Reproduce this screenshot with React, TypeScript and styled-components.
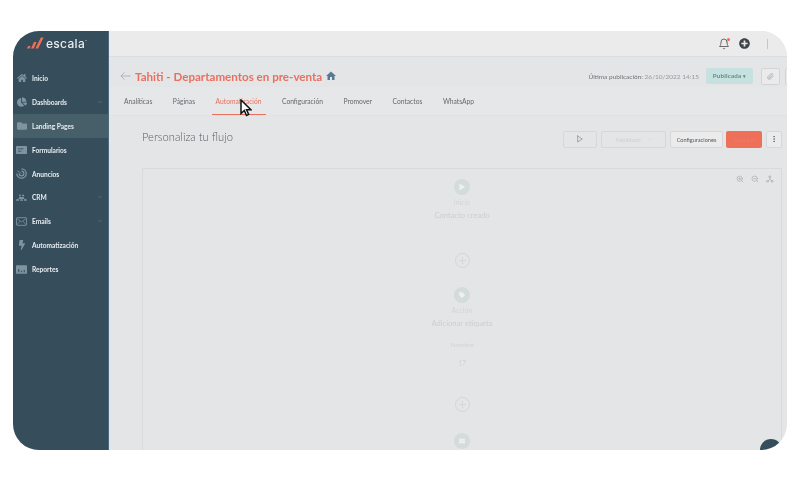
import React from 'react'
import styled, { createGlobalStyle } from 'styled-components'
import { FaHome, FaChartPie, FaFolder, FaBolt, FaPlay, FaTag, FaEnvelope, FaPlusCircle } from 'react-icons/fa'
import { FiChevronDown, FiPlus, FiPlay, FiZoomIn, FiZoomOut, FiPaperclip, FiMoreVertical, FiBell } from 'react-icons/fi'
import { MdHome } from 'react-icons/md'
import { TbHierarchy2 } from 'react-icons/tb'

const GlobalStyle = createGlobalStyle`
    html, body {
        margin: 0;
        padding: 0;
        background: #ffffff;
        font-family: "Lato", "Liberation Sans", sans-serif;
    }
`

const iconGrey = '#8094a0'

const FormsIcon = () => (
    <svg viewBox="0 0 14 10" width="11" height="8">
        <rect width="14" height="10" rx="1" fill={iconGrey} />
        <path d="M2.5 3.5h7M2.5 6.5h4.5" stroke="#364d5c" strokeWidth="1" />
    </svg>
)

const RadarIcon = () => (
    <svg viewBox="0 0 14 14" width="11" height="11" fill="none" stroke={iconGrey}>
        <path d="M7 1a6 6 0 1 1-6 6" strokeWidth="1.6" />
        <path d="M7 4a3 3 0 1 1-3 3" strokeWidth="1.6" />
        <path d="M1.5 3.5L7 7" strokeWidth="1" />
    </svg>
)

const PeopleIcon = () => (
    <svg viewBox="0 0 14 9" width="11" height="7" fill={iconGrey}>
        <circle cx="5" cy="2" r="1.3" />
        <circle cx="9" cy="2" r="1.3" />
        <path d="M3.2 6.5c0-1.6 1-2.6 1.8-2.6h4c.8 0 1.8 1 1.8 2.6z" />
        <path d="M0 8.6c0-1.4.8-2.2 2-2.2s2 .8 2 2.2zM10 8.6c0-1.4.8-2.2 2-2.2s2 .8 2 2.2zM5 8.6c0-1.2.8-1.8 2-1.8s2 .6 2 1.8z" />
    </svg>
)

const MailBoxIcon = () => (
    <svg viewBox="0 0 14 11" width="11" height="9" fill="none" stroke={iconGrey}>
        <rect x="0.6" y="0.6" width="12.8" height="9.8" rx="1" strokeWidth="1.1" />
        <path d="M1 1.5l6 4.5 6-4.5M1 10l4.2-5M13 10L8.8 5" strokeWidth="0.9" />
    </svg>
)

const ReportIcon = () => (
    <svg viewBox="0 0 14 11" width="11" height="9">
        <rect width="14" height="11" rx="1" fill={iconGrey} />
        <path d="M3.5 9V5M7 9V7M10.5 9V6" stroke="#364d5c" strokeWidth="1.4" />
    </svg>
)

const navItems = [
    { label: 'Inicio', icon: <FaHome /> },
    { label: 'Dashboards', icon: <FaChartPie />, more: true },
    { label: 'Landing Pages', icon: <FaFolder />, active: true },
    { label: 'Formularios', icon: <FormsIcon /> },
    { label: 'Anuncios', icon: <RadarIcon /> },
    { label: 'CRM', icon: <PeopleIcon />, more: true },
    { label: 'Emails', icon: <MailBoxIcon />, more: true },
    { label: 'Automatización', icon: <FaBolt /> },
    { label: 'Reportes', icon: <ReportIcon /> }
]

const tabs = [
    { label: 'Analíticas' },
    { label: 'Páginas' },
    { label: 'Automatización', active: true },
    { label: 'Configuración' },
    { label: 'Promover' },
    { label: 'Contactos' },
    { label: 'WhatsApp' }
]

const App: React.FC = () => {
    return (
        <>
            <GlobalStyle />
            <Page>
                <Frame>
                    <Sidebar>
                        <LogoRow>
                            <svg width="17" height="12" viewBox="0 0 17 12">
                                <path d="M0 11.5h2.6l1-2.4H1z M4 11.5h2.8l2.8-6.6H7z M8.4 11.5h2.8L16.6 0.5h-2.8z" fill="#ee6f57" />
                            </svg>
                            <LogoText>escala<sup>™</sup></LogoText>
                        </LogoRow>
                        <Nav>
                            {navItems.map((item) => (
                                <NavItem key={item.label} $active={item.active}>
                                    <NavIcon>{item.icon}</NavIcon>
                                    <span>{item.label}</span>
                                    {item.more ? <NavChevron><FiChevronDown /></NavChevron> : null}
                                </NavItem>
                            ))}
                        </Nav>
                    </Sidebar>
                    <Main>
                        <TopBar>
                            <BellWrap>
                                <FiBell />
                                <BellDot />
                            </BellWrap>
                            <PlusIcon><FaPlusCircle /></PlusIcon>
                            <TopDivider />
                        </TopBar>
                        <Header>
                            <BackArrow viewBox="0 0 12 10">
                                <path d="M11.5 5H1M5 1L1 5l4 4" fill="none" stroke="#a9b1b8" strokeWidth="1" />
                            </BackArrow>
                            <Title>Tahiti - Departamentos en pre-venta</Title>
                            <TitleHome><MdHome /></TitleHome>
                            <LastPublished>Última publicación: <em>26/10/2022 14:15</em></LastPublished>
                            <StatusBadge>Publicada <small>▾</small></StatusBadge>
                            <LinkButton><FiPaperclip /></LinkButton>
                            <LinkButton $clipped />
                        </Header>
                        <Tabs>
                            {tabs.map((tab) => (
                                <Tab key={tab.label} $active={tab.active}>{tab.label}</Tab>
                            ))}
                        </Tabs>
                        <FlowSection>
                            <FlowToolbar>
                                <FlowTitle>Personaliza tu flujo</FlowTitle>
                                <ToolButton $width={34}><FiPlay /></ToolButton>
                                <ToolButton $width={65} $faded>Habilitado <FiChevronDown /></ToolButton>
                                <ToolButton $width={53} $strong>Configuraciones</ToolButton>
                                <SaveButton>Guardar</SaveButton>
                                <ToolButton $width={16} $strong><FiMoreVertical /></ToolButton>
                            </FlowToolbar>
                            <Canvas>
                                <CanvasTools>
                                    <FiZoomIn />
                                    <FiZoomOut />
                                    <TbHierarchy2 />
                                </CanvasTools>
                                <FlowNode>
                                    <NodeCircle><FaPlay /></NodeCircle>
                                    <NodeKind>Inicio</NodeKind>
                                    <NodeName>Contacto creado</NodeName>
                                </FlowNode>
                                <AddStep><FiPlus /></AddStep>
                                <FlowNode>
                                    <NodeCircle><FaTag /></NodeCircle>
                                    <NodeKind>Acción</NodeKind>
                                    <NodeName>Adicionar etiqueta</NodeName>
                                    <NodeField>Nombre</NodeField>
                                    <NodeValue>17</NodeValue>
                                </FlowNode>
                                <AddStep $second><FiPlus /></AddStep>
                                <FlowNode>
                                    <NodeCircle><FaEnvelope /></NodeCircle>
                                </FlowNode>
                            </Canvas>
                        </FlowSection>
                        <ChatBubble />
                    </Main>
                    <Cursor viewBox="0 0 12 18">
                        <path d="M1 1v13.5l3.3-3 2.2 5 2.2-1-2.2-4.8h4.4z" fill="#fff" stroke="#111" strokeWidth="1.5" />
                    </Cursor>
                </Frame>
            </Page>
        </>
    )
}

export default App

const Page = styled.div`
    width: 800px;
    height: 487px;
    padding: 31px 13px 0;
    box-sizing: border-box;
    overflow: hidden;
`

const Frame = styled.div`
    position: relative;
    display: flex;
    width: 774px;
    height: 419px;
    border-radius: 26px;
    overflow: hidden;
    background: #e4e5e7;
    filter: blur(0.3px);
`

const Sidebar = styled.aside`
    flex: none;
    width: 95px;
    background: #364d5c;
    border-right: 1px solid #4f6a80;
    color: #e8edf0;
`

const LogoRow = styled.div`
    display: flex;
    align-items: center;
    gap: 2px;
    height: 24px;
    padding: 0 0 0 14px;
`

const LogoText = styled.span`
    font-family: "Inter", "Liberation Sans", sans-serif;
    font-size: 12px;
    font-weight: 500;
    color: #e9edef;
    letter-spacing: 0.3px;

    sup {
        font-size: 3px;
        vertical-align: 5px;
    }
`

const Nav = styled.nav`
    padding-top: 11px;
`

const NavItem = styled.div<{ $active?: boolean }>`
    display: flex;
    align-items: center;
    height: 23.9px;
    padding: 0 5px 0 2px;
    font-size: 6.6px;
    font-weight: 700;
    background: ${({ $active }) => ($active ? '#465f69' : 'transparent')};
`

const NavIcon = styled.span`
    display: flex;
    justify-content: center;
    width: 13px;
    margin-right: 4px;
    font-size: 10px;
    color: #8094a0;
`

const NavChevron = styled.span`
    display: flex;
    margin-left: auto;
    font-size: 6px;
    color: #71858f;
`

const Main = styled.main`
    position: relative;
    flex: 1;
    min-width: 0;
`

const TopBar = styled.header`
    display: flex;
    align-items: center;
    justify-content: flex-end;
    height: 25px;
    background: #ebebeb;
    border-bottom: 1px solid #dddddf;
`

const BellWrap = styled.span`
    position: relative;
    display: flex;
    margin-right: 9px;
    font-size: 12px;
    color: #6a6a6a;
`

const BellDot = styled.i`
    position: absolute;
    top: 0;
    right: 0;
    width: 3px;
    height: 3px;
    border-radius: 50%;
    background: #ee6f57;
`

const PlusIcon = styled.span`
    display: flex;
    font-size: 11px;
    color: #404449;
`

const TopDivider = styled.span`
    width: 1px;
    height: 10px;
    margin: 0 19px 0 17px;
    background: #c5c6c8;
`

const Header = styled.div`
    display: flex;
    align-items: center;
    height: 22px;
    padding: 8px 0 0 11px;
    overflow: hidden;
`

const BackArrow = styled.svg`
    flex: none;
    width: 11px;
    height: 10px;
    margin-right: 4px;
`

const Title = styled.h1`
    margin: 0;
    font-size: 11.6px;
    font-weight: 700;
    color: #e8705f;
    white-space: nowrap;
`

const TitleHome = styled.span`
    display: flex;
    margin-left: 3px;
    font-size: 12px;
    color: #5b7a92;
`

const LastPublished = styled.span`
    margin-left: auto;
    font-size: 6.5px;
    color: #6f7376;
    white-space: nowrap;

    em {
        font-style: normal;
        color: #96999c;
    }
`

const StatusBadge = styled.span`
    flex: none;
    width: 47px;
    height: 16px;
    margin: 0 8px 0 7px;
    line-height: 16px;
    text-align: center;
    font-size: 6.2px;
    font-weight: 700;
    letter-spacing: 0.2px;
    color: #5f8b87;
    background: #c6e1df;
    border-radius: 2px;

    small {
        font-size: 5px;
    }
`

const LinkButton = styled.span<{ $clipped?: boolean }>`
    flex: none;
    display: flex;
    align-items: center;
    justify-content: center;
    box-sizing: border-box;
    width: 19px;
    height: 17px;
    margin-right: ${({ $clipped }) => ($clipped ? '-17px' : '5px')};
    font-size: 7px;
    color: #9a9c9f;
    background: #ebebec;
    border: 1px solid #d3d4d6;
    border-radius: 2px;
`

const Tabs = styled.nav`
    display: flex;
    height: 28px;
    padding-left: 11px;
    border-bottom: 1px solid #e0e1e3;
    background: #e6e7e8;
`

const Tab = styled.span<{ $active?: boolean }>`
    display: flex;
    align-items: center;
    height: 28px;
    box-sizing: border-box;
    padding: 0 4px;
    margin-right: 12.5px;
    font-size: 6.7px;
    white-space: nowrap;
    color: ${({ $active }) => ($active ? '#e8705f' : '#66696c')};
    border-bottom: 1px solid ${({ $active }) => ($active ? '#e8705f' : 'transparent')};
`

const FlowSection = styled.section`
    padding: 14px 5px 0 33px;
`

const FlowToolbar = styled.div`
    display: flex;
    align-items: center;
    height: 18px;
    margin-bottom: 20px;
`

const FlowTitle = styled.h2`
    flex: 1;
    margin: -5px 0 0;
    font-size: 11.2px;
    font-weight: 300;
    color: #5c6063;
`

const ToolButton = styled.span<{ $width: number; $faded?: boolean; $strong?: boolean }>`
    flex: none;
    display: flex;
    align-items: center;
    justify-content: center;
    gap: 6px;
    box-sizing: border-box;
    width: ${({ $width }) => $width}px;
    height: 17px;
    margin-left: 4px;
    font-size: 5.6px;
    color: ${({ $faded, $strong }) => ($faded ? '#cfd0d2' : $strong ? '#55585b' : '#85888b')};
    background: ${({ $strong }) => ($strong ? '#ebebec' : 'transparent')};
    border: 1px solid #d6d7d9;
    border-radius: 2px;

    svg {
        font-size: ${({ $width }) => ($width === 65 ? 5 : 8)}px;
    }
`

const SaveButton = styled.span`
    flex: none;
    width: 36px;
    height: 17px;
    margin-left: 3px;
    line-height: 17px;
    text-align: center;
    font-size: 6px;
    color: #ee7c66;
    background: #ee7058;
    border-radius: 2px;
`

const Canvas = styled.div`
    position: relative;
    display: flex;
    flex-direction: column;
    align-items: center;
    height: 300px;
    padding-top: 10px;
    border: 1px solid #d9dadc;
    border-bottom: 0;
`

const CanvasTools = styled.div`
    position: absolute;
    top: 6px;
    right: 7px;
    display: flex;
    gap: 7px;
    font-size: 8px;
    color: #a9adaf;
`

const FlowNode = styled.div`
    display: flex;
    flex-direction: column;
    align-items: center;
    width: 100%;
`

const NodeCircle = styled.span`
    display: flex;
    align-items: center;
    justify-content: center;
    width: 16px;
    height: 16px;
    border-radius: 50%;
    font-size: 6px;
    color: #eef0f0;
    background: #d3dcdb;
`

const NodeKind = styled.span`
    margin-top: 3px;
    line-height: 9px;
    font-size: 7px;
    color: #d4d5d7;
`

const NodeName = styled.span`
    margin-top: 3px;
    line-height: 10px;
    font-size: 7.6px;
    color: #cdced0;
`

const NodeField = styled.span`
    margin-top: 13px;
    line-height: 8px;
    font-size: 6.5px;
    color: #d2d3d5;
`

const NodeValue = styled.span`
    margin-top: 10px;
    line-height: 8px;
    font-size: 7px;
    color: #d2d3d5;
`

const AddStep = styled.span<{ $second?: boolean }>`
    display: flex;
    align-items: center;
    justify-content: center;
    box-sizing: border-box;
    width: 15px;
    height: 15px;
    margin: ${({ $second }) => ($second ? '30px 0 21px' : '33px 0 19px')};
    border: 1px solid #d4d5d7;
    border-radius: 50%;
    font-size: 11px;
    color: #d4d5d7;
`

const ChatBubble = styled.span`
    position: absolute;
    right: 5px;
    bottom: -11px;
    width: 22px;
    height: 22px;
    border-radius: 50%;
    background: #364d5c;
`

const Cursor = styled.svg`
    position: absolute;
    left: 227px;
    top: 68px;
    width: 12px;
    height: 18px;
`
